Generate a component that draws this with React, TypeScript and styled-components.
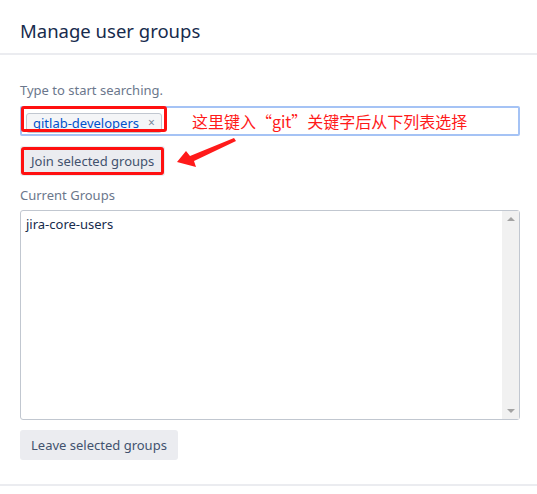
import React from "react";
import styled, { createGlobalStyle } from "styled-components";

const Global = createGlobalStyle`
  html, body { margin: 0; padding: 0; background: #fff; }
  body { font-family: "Noto Sans", "Open Sans", sans-serif; color: #172b4d; }
  * { box-sizing: border-box; }
`;

const Page = styled.div`
  position: relative;
  width: 537px;
  height: 494px;
  overflow: hidden;
  background: #fff;
`;

const Header = styled.header`
  height: 55px;
  padding: 0 20px;
  display: flex;
  align-items: center;
  border-bottom: 2px solid #ebecf0;
`;

const Title = styled.h2`
  margin: 0;
  padding-top: 8px;
  font-size: 18.5px;
  font-weight: 400;
  line-height: 24px;
  color: #172b4d;
`;

const Body = styled.div`
  padding: 25px 17px 24px 20px;
  border-bottom: 2px solid #ebecf0;
  display: flex;
  flex-direction: column;
`;

const Label = styled.label`
  font-size: 13px;
  line-height: 20px;
  color: #6b778c;
  margin-bottom: 6px;
`;

const SearchField = styled.div`
  position: relative;
  height: 30px;
  border: 2px solid #a5c3f5;
  border-radius: 2px;
  display: flex;
  align-items: center;
  padding: 0 4px;
  gap: 30px;
`;

const Tag = styled.span`
  display: inline-flex;
  align-items: center;
  gap: 9px;
  height: 20px;
  margin-top: 3px;
  padding: 0 6px;
  background: #f4f5f7;
  border: 1px solid #c1c7d0;
  border-radius: 3px;
  font-size: 13px;
  color: #0052cc;
`;

const Remove = styled.span`
  color: #7a869a;
  font-size: 12px;
`;

const Note = styled.span`
  font-family: "Noto Sans CJK SC", sans-serif;
  font-size: 16px;
  color: #ff1a1a;
  line-height: 20px;
`;

const Button = styled.button<{ $gap: number }>`
  align-self: flex-start;
  margin-top: ${(p) => p.$gap}px;
  height: 30px;
  padding: 0 11px;
  border: none;
  border-radius: 3px;
  background: #ebecf0;
  color: #42526e;
  font-family: inherit;
  font-size: 13px;
  position: relative;
`;

const Highlight = styled.span<{ $l: number; $t: number; $w: number; $h: number }>`
  position: absolute;
  left: ${(p) => p.$l}px;
  top: ${(p) => p.$t}px;
  width: ${(p) => p.$w}px;
  height: ${(p) => p.$h}px;
  border: 3px solid #ff1010;
  border-radius: 3px;
  pointer-events: none;
`;

const SubLabel = styled(Label)`
  margin-top: 9px;
  margin-bottom: 5px;
`;

const ListBox = styled.div`
  height: 210px;
  border: 1px solid #c1c7d0;
  border-radius: 3px;
  display: flex;
`;

const Options = styled.ul`
  flex: 1;
  margin: 0;
  padding: 2px 5px;
  list-style: none;
  font-size: 13px;
  line-height: 22px;
  color: #172b4d;
`;

const Scrollbar = styled.div`
  width: 17px;
  background: #f1f1f1;
  display: flex;
  flex-direction: column;
  justify-content: space-between;
  align-items: center;
  padding: 6px 0;
`;

const Arrow = styled.span<{ $up?: boolean }>`
  width: 0;
  height: 0;
  border-left: 4px solid transparent;
  border-right: 4px solid transparent;
  ${(p) => (p.$up ? "border-bottom: 4px solid #a3a3a3;" : "border-top: 4px solid #a3a3a3;")}
`;

const Overlay = styled.svg`
  position: absolute;
  left: 0;
  top: 0;
  pointer-events: none;
`;

export default function App() {
  return (
    <Page>
      <Global />
      <Header>
        <Title>Manage user groups</Title>
      </Header>
      <Body>
        <Label>Type to start searching.</Label>
        <SearchField>
          <Tag>
            gitlab-developers <Remove>×</Remove>
          </Tag>
          <Note>这里键入“git”关键字后从下列表选择</Note>
          <Highlight $l={-1} $t={-2} $w={146} $h={26} />
        </SearchField>
        <Button $gap={10}>
          Join selected groups
          <Highlight $l={1} $t={1} $w={143} $h={28} />
        </Button>
        <SubLabel>Current Groups</SubLabel>
        <ListBox>
          <Options>
            <li>jira-core-users</li>
          </Options>
          <Scrollbar>
            <Arrow $up />
            <Arrow />
          </Scrollbar>
        </ListBox>
        <Button $gap={10}>Leave selected groups</Button>
      </Body>
      <Overlay width="537" height="494" viewBox="0 0 537 494">
        <polygon
          points="234,138 190,156 186,151 177,162 196,167 194,161 236,141"
          fill="#ff1a1a"
        />
      </Overlay>
    </Page>
  );
}
